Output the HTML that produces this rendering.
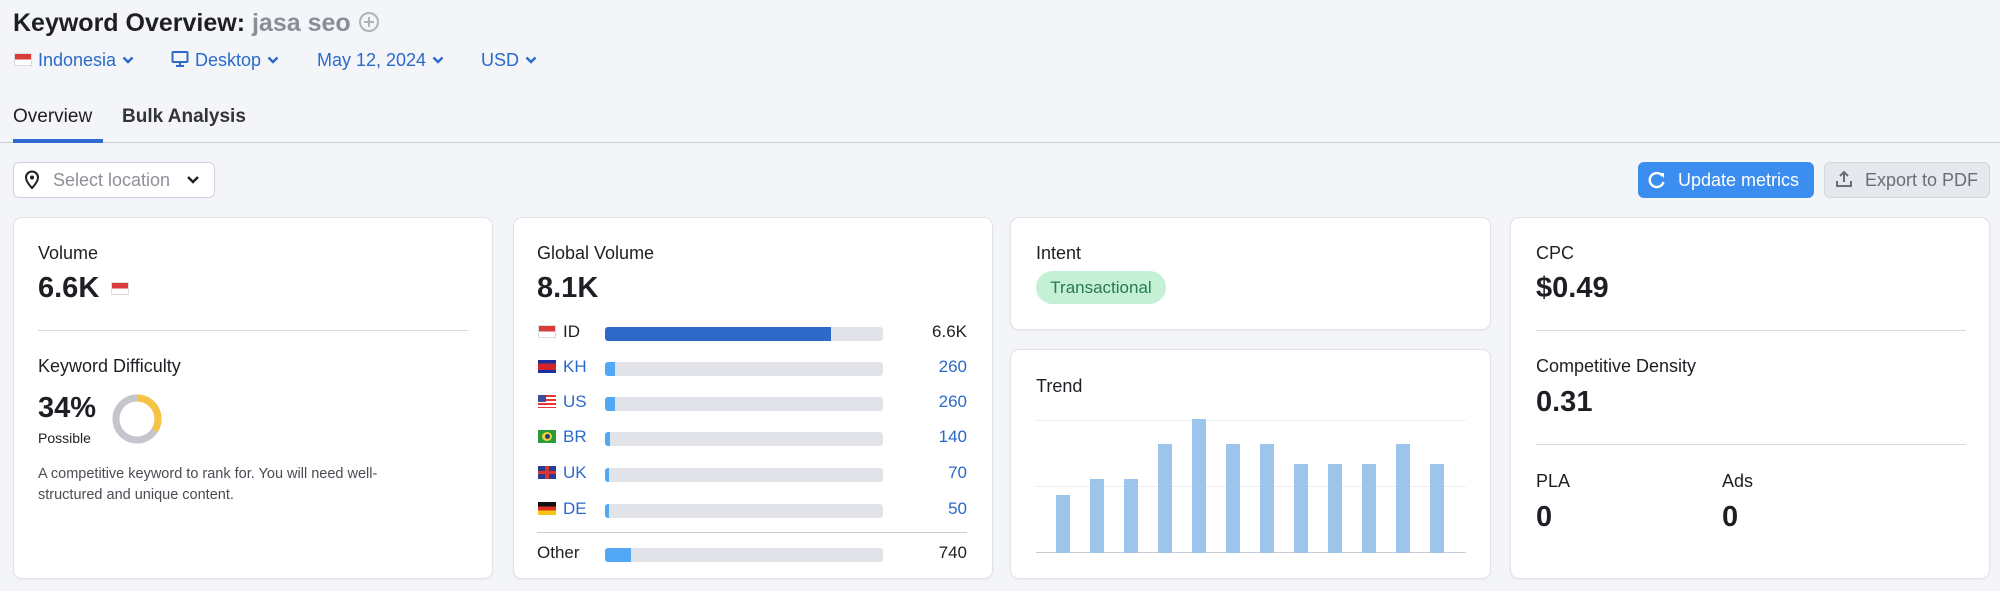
<!DOCTYPE html>
<html><head><meta charset="utf-8"><style>
*{margin:0;padding:0;box-sizing:border-box}
body{width:2000px;height:591px;background:#f4f5f9;font-family:"Liberation Sans",Arial,sans-serif;color:#1e1f24;position:relative;overflow:hidden}
.a{position:absolute;white-space:nowrap}
.card{position:absolute;background:#fff;border:1px solid #e1e3ea;border-radius:9px;box-shadow:0 1px 2px rgba(0,0,0,.05)}
.lbl{font-size:18px;line-height:22px;color:#1e1f24}
.big{font-size:29px;font-weight:bold;line-height:34px}
.blue{color:#2a6ac8}
.hr{position:absolute;height:1px;background:#d8dae2}
.bar{position:absolute;left:605px;width:278px;height:14px;background:#e2e3e9;border-radius:3px;overflow:hidden}
.bar i{position:absolute;left:0;top:0;bottom:0;background:#53a8f5}
.cc{font-size:17px;line-height:20px}
.tb{position:absolute;width:14px;background:#9dc5ec;bottom:38px}
.chev{display:inline-block;vertical-align:middle;margin-left:6px;margin-top:-3px}
</style></head><body>
<div class="a" style="left:13px;top:9px;font-size:25px;font-weight:bold;line-height:28px">Keyword Overview: <span style="color:#8a8d96">jasa seo</span></div>
<svg class="a" style="left:358px;top:11px" width="22" height="22" viewBox="0 0 22 22"><circle cx="11" cy="11" r="9" fill="none" stroke="#b0b3bb" stroke-width="2"/><path d="M11 6v10M6 11h10" stroke="#b0b3bb" stroke-width="2"/></svg>
<div class="a" style="left:14px;top:53px;width:18px;height:13px;border:1px solid #ddd;background:linear-gradient(#d93a3a 50%,#fff 50%)"></div>
<div class="a blue" style="left:38px;top:49px;font-size:18px;line-height:22px">Indonesia<svg class="chev" width="12" height="8" viewBox="0 0 12 8"><path d="M1.5 1.5l4.5 4.5 4.5-4.5" fill="none" stroke="#2a6ac8" stroke-width="2.4"/></svg></div>
<svg class="a" style="left:171px;top:50px" width="18" height="18" viewBox="0 0 18 18"><rect x="1.5" y="2" width="15" height="10" rx="1" fill="none" stroke="#2a6ac8" stroke-width="2"/><path d="M9 12v3M5 16h8" stroke="#2a6ac8" stroke-width="2"/></svg>
<div class="a blue" style="left:195px;top:49px;font-size:18px;line-height:22px">Desktop<svg class="chev" width="12" height="8" viewBox="0 0 12 8"><path d="M1.5 1.5l4.5 4.5 4.5-4.5" fill="none" stroke="#2a6ac8" stroke-width="2.4"/></svg></div>
<div class="a blue" style="left:317px;top:49px;font-size:18px;line-height:22px">May 12, 2024<svg class="chev" width="12" height="8" viewBox="0 0 12 8"><path d="M1.5 1.5l4.5 4.5 4.5-4.5" fill="none" stroke="#2a6ac8" stroke-width="2.4"/></svg></div>
<div class="a blue" style="left:481px;top:49px;font-size:18px;line-height:22px">USD<svg class="chev" width="12" height="8" viewBox="0 0 12 8"><path d="M1.5 1.5l4.5 4.5 4.5-4.5" fill="none" stroke="#2a6ac8" stroke-width="2.4"/></svg></div>
<div class="a" style="left:13px;top:106px;font-size:19px;line-height:22px">Overview</div>
<div class="a" style="left:122px;top:106px;font-size:19px;line-height:22px;font-weight:bold;color:#33343a">Bulk Analysis</div>
<div class="a" style="left:0;top:142px;width:2000px;height:1px;background:#c9ccd6"></div>
<div class="a" style="left:13px;top:139px;width:90px;height:4px;background:#2f6bce"></div>
<div class="a" style="left:13px;top:162px;width:202px;height:36px;background:#fff;border:1px solid #d0d3db;border-radius:6px"></div>
<svg class="a" style="left:24px;top:170px" width="16" height="20" viewBox="0 0 16 20"><path d="M8 18s-6-6-6-10.5a6 6 0 0 1 12 0C14 12 8 18 8 18z" fill="none" stroke="#1e1f24" stroke-width="2"/><circle cx="8" cy="7.5" r="2" fill="#1e1f24"/></svg>
<div class="a" style="left:53px;top:169px;font-size:18px;line-height:22px;color:#8d9099">Select location</div>
<svg class="a" style="left:186px;top:175px" width="14" height="10" viewBox="0 0 14 10"><path d="M2 2l5 5 5-5" fill="none" stroke="#1e1f24" stroke-width="2.4"/></svg>
<div class="a" style="left:1638px;top:162px;width:176px;height:36px;background:#3b8ef0;border-radius:6px;color:#fff;font-size:18px;line-height:36px;padding-left:40px">Update metrics</div>
<svg class="a" style="left:1648px;top:171px" width="18" height="18" viewBox="0 0 18 18"><path d="M14.5 5A7 7 0 1 0 15.5 11" fill="none" stroke="#fff" stroke-width="2.4"/><path d="M11 2h5v5z" fill="#fff"/></svg>
<div class="a" style="left:1824px;top:162px;width:166px;height:36px;background:#e7e8ed;border:1px solid #d3d5dc;border-radius:6px;color:#6b6e77;font-size:18px;line-height:34px;padding-left:40px">Export to PDF</div>
<svg class="a" style="left:1835px;top:170px" width="18" height="18" viewBox="0 0 18 18"><path d="M9 12V2M5 6l4-4 4 4M2 11v5h14v-5" fill="none" stroke="#6b6e77" stroke-width="2"/></svg>

<div class="card" style="left:13px;top:217px;width:480px;height:362px"></div>
<div class="a lbl" style="left:38px;top:242px">Volume</div>
<div class="a big" style="left:38px;top:271px">6.6K</div>
<div class="a" style="left:111px;top:282px;width:18px;height:13px;border:1px solid #ddd;background:linear-gradient(#d93a3a 50%,#fff 50%)"></div>
<div class="hr" style="left:38px;top:330px;width:430px"></div>
<div class="a lbl" style="left:38px;top:355px">Keyword Difficulty</div>
<div class="a big" style="left:38px;top:391px">34%</div>
<div class="a" style="left:38px;top:430px;font-size:14px;line-height:17px">Possible</div>
<svg class="a" style="left:110px;top:392px" width="54" height="54" viewBox="0 0 54 54"><circle cx="27" cy="27" r="21" fill="none" stroke="#c4c6cc" stroke-width="7"/><circle cx="27" cy="27" r="21" fill="none" stroke="#f6c344" stroke-width="7" stroke-dasharray="44.9 132" transform="rotate(-90 27 27)"/></svg>
<div class="a" style="left:38px;top:464px;font-size:14.5px;line-height:21px;color:#4a4c54;white-space:normal;width:400px">A competitive keyword to rank for. You will need well-structured and unique content.</div>

<div class="card" style="left:513px;top:217px;width:480px;height:362px"></div>
<div class="a lbl" style="left:537px;top:242px">Global Volume</div>
<div class="a big" style="left:537px;top:271px">8.1K</div>

<div class="a" style="left:538px;top:325px;width:18px;height:13px;border:1px solid #ddd;background:linear-gradient(#d93a3a 50%,#fff 50%)"></div>
<div class="a cc" style="left:563px;top:322px">ID</div>
<div class="bar" style="top:327px"><i style="width:226px;background:#2d6ac7"></i></div>
<div class="a cc" style="right:1033px;top:322px">6.6K</div>

<div class="a" style="left:538px;top:360px;width:18px;height:13px;background:linear-gradient(#1b2f9e 25%,#d1242c 25%,#d1242c 75%,#1b2f9e 75%)"></div>
<div class="a cc blue" style="left:563px;top:357px">KH</div>
<div class="bar" style="top:362px"><i style="width:10px"></i></div>
<div class="a cc blue" style="right:1033px;top:357px">260</div>

<div class="a" style="left:538px;top:395px;width:18px;height:13px;background:repeating-linear-gradient(#e33 0 2px,#fff 2px 4px)"><div style="width:8px;height:7px;background:#3c4ea0"></div></div>
<div class="a cc blue" style="left:563px;top:392px">US</div>
<div class="bar" style="top:397px"><i style="width:10px"></i></div>
<div class="a cc blue" style="right:1033px;top:392px">260</div>

<div class="a" style="left:538px;top:430px;width:18px;height:13px;background:#2a9a3a"><div style="position:absolute;left:4px;top:2px;width:10px;height:9px;background:#f4d332;border-radius:50%"></div><div style="position:absolute;left:7px;top:4px;width:5px;height:5px;background:#243c8c;border-radius:50%"></div></div>
<div class="a cc blue" style="left:563px;top:427px">BR</div>
<div class="bar" style="top:432px"><i style="width:5px"></i></div>
<div class="a cc blue" style="right:1033px;top:427px">140</div>

<div class="a" style="left:538px;top:466px;width:18px;height:13px;background:#2a3d8c"><div style="position:absolute;left:0;top:5px;width:18px;height:3px;background:#d33"></div><div style="position:absolute;left:7px;top:0;width:4px;height:13px;background:#d33"></div></div>
<div class="a cc blue" style="left:563px;top:463px">UK</div>
<div class="bar" style="top:468px"><i style="width:4px"></i></div>
<div class="a cc blue" style="right:1033px;top:463px">70</div>

<div class="a" style="left:538px;top:502px;width:18px;height:13px;background:linear-gradient(#111 33%,#d32 33%,#d32 66%,#f5c518 66%)"></div>
<div class="a cc blue" style="left:563px;top:499px">DE</div>
<div class="bar" style="top:504px"><i style="width:4px"></i></div>
<div class="a cc blue" style="right:1033px;top:499px">50</div>

<div class="hr" style="left:537px;top:532px;width:430px;background:#c9ccd4"></div>
<div class="a cc" style="left:537px;top:543px">Other</div>
<div class="bar" style="top:548px"><i style="width:26px"></i></div>
<div class="a cc" style="right:1033px;top:543px">740</div>

<div class="card" style="left:1010px;top:217px;width:481px;height:113px"></div>
<div class="a lbl" style="left:1036px;top:242px">Intent</div>
<div class="a" style="left:1036px;top:271px;width:130px;height:33px;background:#c4f0d6;border-radius:17px;color:#287a4c;font-size:17px;line-height:33px;text-align:center">Transactional</div>

<div class="card" style="left:1010px;top:349px;width:481px;height:230px"></div>
<div class="a lbl" style="left:1036px;top:375px">Trend</div>
<div class="a" style="left:1036px;top:420px;width:430px;height:1px;background:#eceef2"></div>
<div class="a" style="left:1036px;top:486px;width:430px;height:1px;background:#eceef2"></div>
<div class="a" style="left:1036px;top:552px;width:430px;height:1px;background:#c9ccd4"></div>
<div class="tb" style="left:1056px;height:58px"></div>
<div class="tb" style="left:1090px;height:74px"></div>
<div class="tb" style="left:1124px;height:74px"></div>
<div class="tb" style="left:1158px;height:109px"></div>
<div class="tb" style="left:1192px;height:134px"></div>
<div class="tb" style="left:1226px;height:109px"></div>
<div class="tb" style="left:1260px;height:109px"></div>
<div class="tb" style="left:1294px;height:89px"></div>
<div class="tb" style="left:1328px;height:89px"></div>
<div class="tb" style="left:1362px;height:89px"></div>
<div class="tb" style="left:1396px;height:109px"></div>
<div class="tb" style="left:1430px;height:89px"></div>

<div class="card" style="left:1510px;top:217px;width:480px;height:362px"></div>
<div class="a lbl" style="left:1536px;top:242px">CPC</div>
<div class="a big" style="left:1536px;top:271px">$0.49</div>
<div class="hr" style="left:1536px;top:330px;width:430px"></div>
<div class="a lbl" style="left:1536px;top:355px">Competitive Density</div>
<div class="a big" style="left:1536px;top:385px">0.31</div>
<div class="hr" style="left:1536px;top:444px;width:430px"></div>
<div class="a lbl" style="left:1536px;top:470px">PLA</div>
<div class="a big" style="left:1536px;top:500px">0</div>
<div class="a lbl" style="left:1722px;top:470px">Ads</div>
<div class="a big" style="left:1722px;top:500px">0</div>
</body></html>
